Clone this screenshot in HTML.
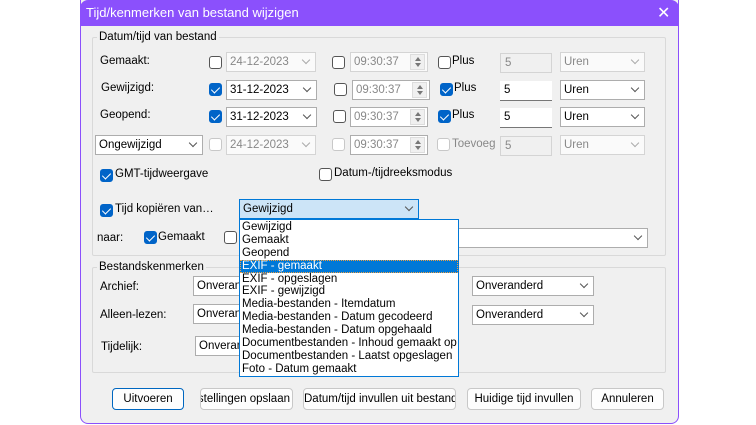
<!DOCTYPE html>
<html><head><meta charset="utf-8"><style>
*{box-sizing:border-box}
body{margin:0;width:756px;height:425px;background:#fff;font-family:"Liberation Sans",sans-serif;font-size:11.5px;color:#000;position:relative;overflow:hidden}
.a{position:absolute;white-space:nowrap}
#dlg{position:absolute;left:80px;top:0;width:599px;height:424px;background:#f0f0f0;border:1px solid #8b50fc;border-top:none;border-radius:0 0 8px 8px}
#tb{position:absolute;left:80px;top:0;width:599px;height:26px;background:#8b50fc;border-radius:8px 8px 0 0;color:#fff;font-size:13px}
.grp{position:absolute;border:1px solid #d9d9d9;border-radius:2px}
.lbl{position:absolute;background:#f0f0f0;padding:0 2px;white-space:nowrap}
.cb{position:absolute;width:13px;height:13px;border:1px solid #555;border-radius:3px;background:#fff}
.cb.on{background:#0064c8;border-color:#0064c8}
.cb.on::after{content:"";position:absolute;left:3px;top:1px;width:4px;height:7px;border:solid #fff;border-width:0 1px 1px 0;transform:rotate(45deg)}
.cb.dis{border-color:#c8c8c8}
.box{position:absolute;height:20px;border:1px solid #adadad;background:#fff;padding:2px 3px;line-height:14px;white-space:nowrap;overflow:hidden}
.box.dis{background:#fafafa;color:#888;border-color:#d4d4d4}
.ed{position:absolute;height:20px;background:#fff;border-bottom:1px solid #777;padding:2px 4px;line-height:15px}
.ed.dis{background:#f0f0f0;border:1px solid #d4d4d4;color:#888}
.chev{position:absolute;right:6px;top:4px;width:6px;height:6px;border:solid #555;border-width:0 1px 1px 0;transform:rotate(45deg)}
.box.dis .chev{border-color:#aaa}
.spin{position:absolute;right:2px;top:1px;width:15px;height:16px;background:#f0f0f0;border:1px solid #ddd}
.spin::before{content:"";position:absolute;left:4px;top:2px;border:3px solid transparent;border-bottom:4px solid #777;border-top:none}
.spin::after{content:"";position:absolute;left:4px;bottom:2px;border:3px solid transparent;border-top:4px solid #777;border-bottom:none}
.btn{position:absolute;top:388px;height:22px;border:1px solid #c8c8c8;border-radius:4px;background:#fdfdfd;text-align:center;line-height:20px;overflow:hidden;white-space:nowrap}
#list{position:absolute;left:239px;top:219px;width:220px;height:158px;background:#fff;border:1px solid #0078d7;padding-top:1px;white-space:nowrap;overflow:hidden}
#list div{height:12.9px;line-height:13px;padding-left:2px}
#list .sel{background:#0078d7;color:#fff;outline:1px dotted #f0a040;outline-offset:-1px}
</style></head><body>
<div id="dlg"></div>
<div id="tb"><span class="a" style="left:6px;top:5px">Tijd/kenmerken van bestand wijzigen</span><span class="a" style="left:577px;top:3px;font-size:16px">✕</span></div>

<div class="grp" style="left:92px;top:37px;width:574px;height:219px"></div>
<span class="lbl" style="left:97px;top:31px">Datum/tijd van bestand</span>

<span class="a" style="left:100px;top:55px">Gemaakt:</span>
<div class="cb" style="left:209px;top:56px"></div>
<div class="box dis" style="left:226px;top:52px;width:90px">24-12-2023<i class="chev"></i></div>
<div class="cb" style="left:332px;top:56px"></div>
<div class="box dis" style="left:350px;top:52px;width:78px">09:30:37<i class="spin"></i></div>
<div class="cb" style="left:438px;top:56px"></div><span class="a" style="left:452px;top:55px">Plus</span>
<div class="ed dis" style="left:500px;top:53px;width:52px">5</div>
<div class="box dis" style="left:560px;top:52px;width:85px">Uren<i class="chev"></i></div>

<span class="a" style="left:101px;top:82px">Gewijzigd:</span>
<div class="cb on" style="left:209px;top:83px"></div>
<div class="box" style="left:226px;top:80px;width:91px">31-12-2023<i class="chev"></i></div>
<div class="cb" style="left:334px;top:83px"></div>
<div class="box" style="left:352px;top:80px;width:78px;color:#888">09:30:37<i class="spin"></i></div>
<div class="cb on" style="left:440px;top:83px"></div><span class="a" style="left:454px;top:82px">Plus</span>
<div class="ed" style="left:500px;top:81px;width:52px">5</div>
<div class="box" style="left:560px;top:80px;width:85px">Uren<i class="chev"></i></div>

<span class="a" style="left:100px;top:109px">Geopend:</span>
<div class="cb on" style="left:209px;top:110px"></div>
<div class="box" style="left:226px;top:107px;width:91px">31-12-2023<i class="chev"></i></div>
<div class="cb" style="left:333px;top:110px"></div>
<div class="box" style="left:350px;top:107px;width:78px;color:#888">09:30:37<i class="spin"></i></div>
<div class="cb on" style="left:438px;top:110px"></div><span class="a" style="left:452px;top:109px">Plus</span>
<div class="ed" style="left:500px;top:108px;width:52px">5</div>
<div class="box" style="left:560px;top:107px;width:85px">Uren<i class="chev"></i></div>

<div class="box" style="left:95px;top:135px;width:108px">Ongewijzigd<i class="chev"></i></div>
<div class="cb dis" style="left:209px;top:138px"></div>
<div class="box dis" style="left:226px;top:135px;width:90px">24-12-2023<i class="chev"></i></div>
<div class="cb dis" style="left:332px;top:138px"></div>
<div class="box" style="left:350px;top:135px;width:78px;color:#888">09:30:37<i class="spin"></i></div>
<div class="cb dis" style="left:437px;top:138px"></div><span class="a" style="left:452px;top:138px;color:#888;width:43px;overflow:hidden">Toevoegen</span>
<div class="ed dis" style="left:500px;top:136px;width:52px">5</div>
<div class="box dis" style="left:560px;top:135px;width:85px">Uren<i class="chev"></i></div>

<div class="cb on" style="left:100px;top:169px"></div><span class="a" style="left:115px;top:168px">GMT-tijdweergave</span>
<div class="cb" style="left:319px;top:168px"></div><span class="a" style="left:334px;top:167px">Datum-/tijdreeksmodus</span>

<div class="cb on" style="left:100px;top:204px"></div><span class="a" style="left:115px;top:203px">Tijd kopiëren van…</span>
<div class="box" style="left:239px;top:199px;width:180px;background:#cce4f7;border-color:#0078d7">Gewijzigd<i class="chev"></i></div>

<span class="a" style="left:97px;top:232px">naar:</span>
<div class="cb on" style="left:144px;top:231px"></div><span class="a" style="left:158px;top:231px">Gemaakt</span>
<div class="cb" style="left:224px;top:231px"></div>
<div class="box" style="left:440px;top:228px;width:208px"><i class="chev"></i></div>

<div class="grp" style="left:92px;top:267px;width:574px;height:106px"></div>
<span class="lbl" style="left:97px;top:261px">Bestandskenmerken</span>
<span class="a" style="left:100px;top:281px">Archief:</span>
<div class="box" style="left:193px;top:276px;width:70px">Onveranderd</div>
<div class="box" style="left:472px;top:276px;width:122px">Onveranderd<i class="chev"></i></div>
<span class="a" style="left:100px;top:309px">Alleen-lezen:</span>
<div class="box" style="left:193px;top:304px;width:70px">Onveranderd</div>
<div class="box" style="left:472px;top:305px;width:122px">Onveranderd<i class="chev"></i></div>
<span class="a" style="left:101px;top:341px">Tijdelijk:</span>
<div class="box" style="left:195px;top:336px;width:70px">Onveranderd</div>

<div id="list">
<div>Gewijzigd</div><div>Gemaakt</div><div>Geopend</div><div class="sel">EXIF - gemaakt</div><div>EXIF - opgeslagen</div><div>EXIF - gewijzigd</div><div>Media-bestanden - Itemdatum</div><div>Media-bestanden - Datum gecodeerd</div><div>Media-bestanden - Datum opgehaald</div><div>Documentbestanden - Inhoud gemaakt op</div><div>Documentbestanden - Laatst opgeslagen</div><div>Foto - Datum gemaakt</div>
</div>

<div class="btn" style="left:112px;width:72px;border:1px solid #0067c0">Uitvoeren</div>
<div class="btn" style="left:200px;width:93px"><span style="position:absolute;right:2px">Instellingen opslaan</span></div>
<div class="btn" style="left:303px;width:153px">Datum/tijd invullen uit bestand</div>
<div class="btn" style="left:467px;width:114px">Huidige tijd invullen</div>
<div class="btn" style="left:591px;width:73px">Annuleren</div>
</body></html>
